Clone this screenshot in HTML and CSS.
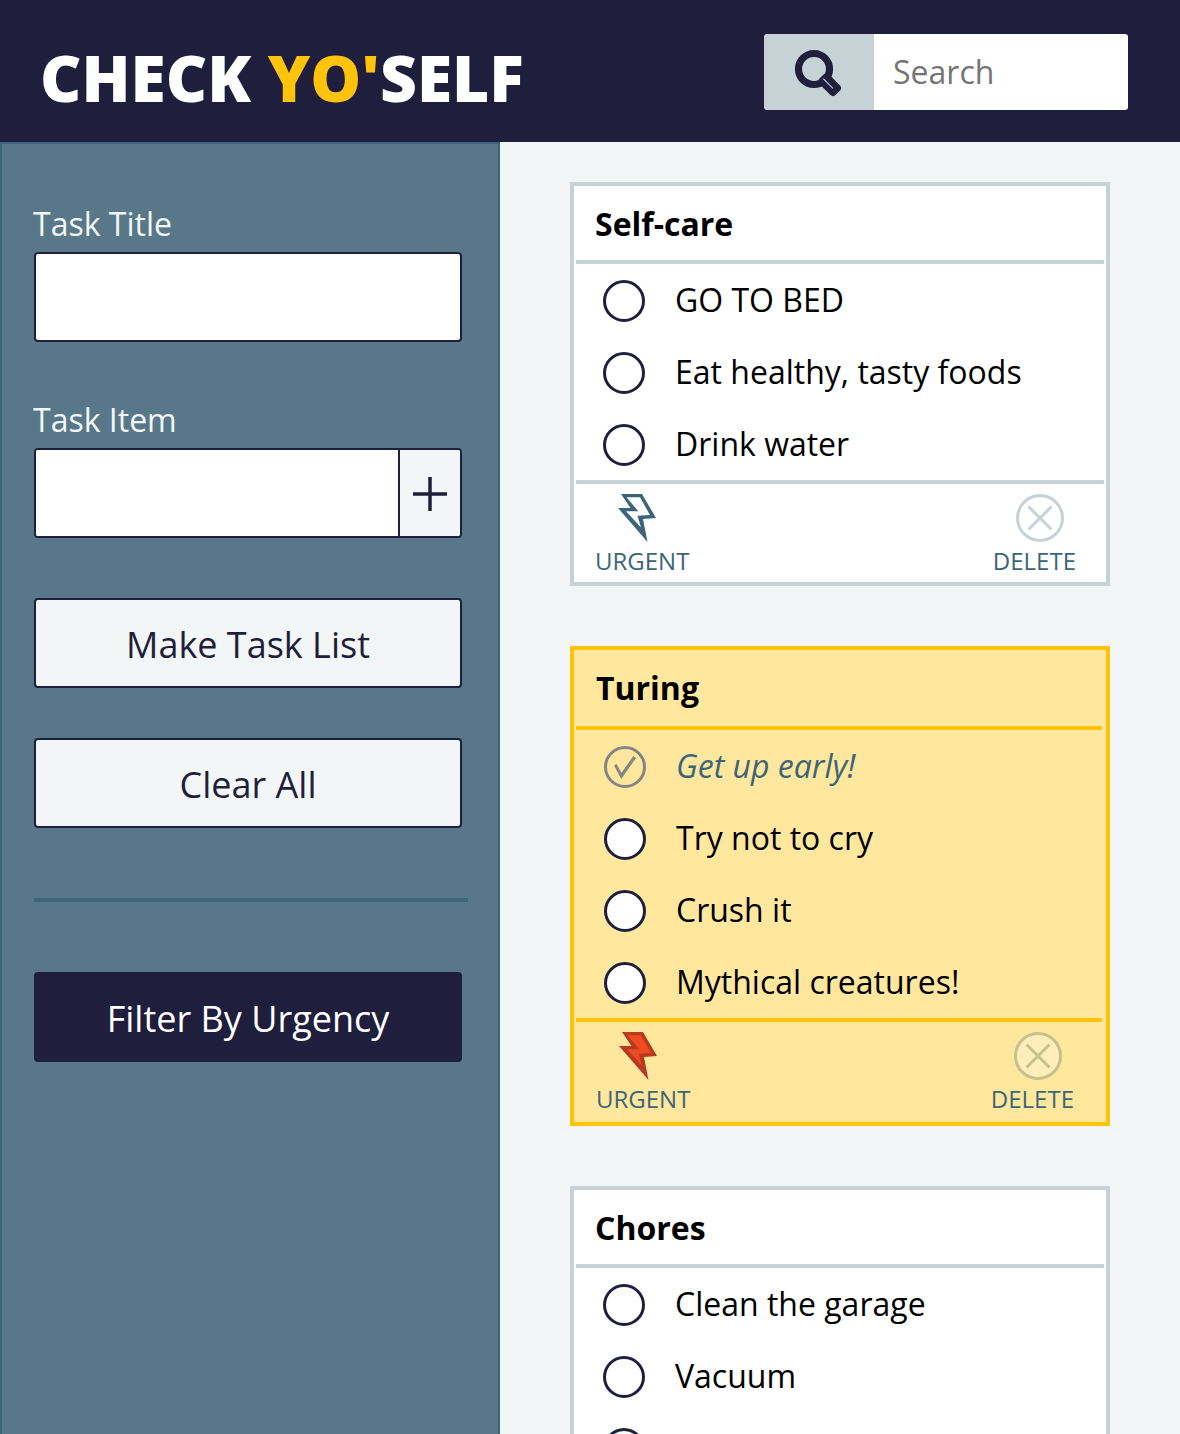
FILE: index.html
```html
<!DOCTYPE html>
<html lang="en">
<head>
  <meta charset="utf-8">
  <meta name="viewport" content="width=device-width, initial-scale=1">
  <title>Check Yo'Self</title>
  <link rel="stylesheet" href="styles.css">
</head>
<body>
  <svg class="sprite" aria-hidden="true">
    <symbol id="bolt" viewBox="0 0 48 48">
      <path class="bolt-edge" d="M3 0H24L38 24L25 25L29.500 48L0 14H12.500Z"/>
      <path class="bolt-fill" d="M8.500 3.200H22L32 21L19.500 21.700L23 33.500L8 17.300H20.300Z"/>
    </symbol>
    <symbol id="cross" viewBox="0 0 48 48">
      <circle class="cross-ring" cx="24" cy="24" r="22.500"/>
      <path class="cross-mark" d="M12.500 12.500L35.500 35.500M35.500 12.500L12.500 35.500"/>
    </symbol>
  </svg>

  <header class="header">
    <h1 class="brand">CHECK <span class="brand-accent">YO'</span>SELF</h1>
    <form class="search" role="search">
      <button class="search-button" type="button" aria-label="Search tasks">
        <svg class="search-icon" viewBox="0 0 48 48" aria-hidden="true">
          <circle cx="19" cy="21" r="15.500" fill="none" stroke="currentColor" stroke-width="7.200"/>
          <rect x="26" y="23.200" width="23" height="13.600" rx="4" fill="currentColor" transform="rotate(45 28 30)"/>
          <path d="M28.300 30.700L38 40.300" fill="none" stroke="#c7d2d7" stroke-width="1.100"/>
        </svg>
      </button>
      <input class="search-input" type="text" placeholder="Search" aria-label="Search">
    </form>
  </header>

  <div class="layout">
    <aside class="sidebar">
      <form class="task-form">
        <label class="field-label" for="task-title">Task Title</label>
        <input class="field" id="task-title" type="text">
        <label class="field-label" for="task-item">Task Item</label>
        <div class="field field-group">
          <input class="field-input" id="task-item" type="text">
          <button class="add-button" type="button" aria-label="Add item">
            <svg class="plus-icon" viewBox="0 0 34 34" aria-hidden="true"><path d="M17 0V34M0 17H34" fill="none" stroke="currentColor" stroke-width="3.500"/></svg>
          </button>
        </div>
        <button class="button" type="button">Make Task List</button>
        <button class="button" type="button">Clear All</button>
      </form>
      <hr class="divider">
      <button class="button button-dark" type="button">Filter By Urgency</button>
    </aside>

    <main class="board">
      <article class="card">
        <h2 class="card-title">Self-care</h2>
        <ul class="items">
          <li><label class="item"><input class="check" type="checkbox"><span>GO TO BED</span></label></li>
          <li><label class="item"><input class="check" type="checkbox"><span>Eat healthy, tasty foods</span></label></li>
          <li><label class="item"><input class="check" type="checkbox"><span>Drink water</span></label></li>
        </ul>
        <footer class="card-footer">
          <button class="action" type="button"><svg class="action-icon"><use href="#bolt"/></svg>URGENT</button>
          <button class="action" type="button"><svg class="action-icon"><use href="#cross"/></svg>DELETE</button>
        </footer>
      </article>

      <article class="card card-urgent">
        <h2 class="card-title">Turing</h2>
        <ul class="items">
          <li><label class="item"><input class="check" type="checkbox" checked><span>Get up early!</span></label></li>
          <li><label class="item"><input class="check" type="checkbox"><span>Try not to cry</span></label></li>
          <li><label class="item"><input class="check" type="checkbox"><span>Crush it</span></label></li>
          <li><label class="item"><input class="check" type="checkbox"><span>Mythical creatures!</span></label></li>
        </ul>
        <footer class="card-footer">
          <button class="action" type="button"><svg class="action-icon"><use href="#bolt"/></svg>URGENT</button>
          <button class="action" type="button"><svg class="action-icon"><use href="#cross"/></svg>DELETE</button>
        </footer>
      </article>

      <article class="card">
        <h2 class="card-title">Chores</h2>
        <ul class="items">
          <li><label class="item"><input class="check" type="checkbox"><span>Clean the garage</span></label></li>
          <li><label class="item"><input class="check" type="checkbox"><span>Vacuum</span></label></li>
          <li><label class="item"><input class="check" type="checkbox" aria-label="New item"></label></li>
        </ul>
      </article>
    </main>
  </div>
</body>
</html>
```
FILE: styles.css
```css
:root {
  --navy: #1f1e3c;
  --teal: #3c6579;
  --slate: #587889;
  --mist: #c7d2d7;
  --pale: #f3f6f7;
  --yellow: #ffc30b;
}

* {
  box-sizing: border-box;
}

body {
  margin: 0;
  height: 100vh;
  display: flex;
  flex-direction: column;
  font: 32px/44px "Open Sans", sans-serif;
  color: #000;
  background: var(--pale);
}

button,
input {
  font: inherit;
  margin: 0;
}

button {
  cursor: pointer;
}

.sprite {
  display: none;
}

/* Header */
.header {
  display: flex;
  justify-content: space-between;
  align-items: flex-start;
  gap: 40px;
  padding: 34px 52px 20px 40px;
  background: var(--navy);
}

.brand {
  margin: 0;
  font-size: 64px;
  line-height: 88px;
  font-weight: 800;
  color: #fff;
  white-space: nowrap;
}

.brand-accent {
  color: var(--yellow);
}

.search {
  display: flex;
  flex: 0 1 364px;
  height: 76px;
  border-radius: 3px;
  overflow: hidden;
}

.search-button {
  flex: 0 0 110px;
  display: flex;
  align-items: center;
  justify-content: center;
  padding: 0;
  border: 0;
  color: var(--navy);
  background: var(--mist);
}

.search-icon {
  width: 48px;
  height: 48px;
  overflow: visible;
}

.search-input {
  flex: 1;
  min-width: 0;
  padding: 0 19px;
  border: 0;
  background: #fff;
}

.search-input::placeholder {
  color: #757575;
}

/* Layout */
.layout {
  flex: 1;
  min-height: 0;
  display: grid;
  grid-template-columns: 500px 1fr;
}

.board {
  display: flex;
  flex-direction: column;
  gap: 60px;
  padding: 40px 70px;
  overflow-y: auto;
  scrollbar-width: none;
}

/* Sidebar */
.sidebar {
  padding: 58px 30px 58px 31px;
  border: 2px solid var(--teal);
  border-bottom: 0;
  background: var(--slate);
}

.task-form,
.sidebar {
  display: flex;
  flex-direction: column;
}

.field-label {
  margin-bottom: 6px;
  color: var(--pale);
}

.field,
.button {
  height: 90px;
  margin: 0 6px 0 1px;
  border: 2px solid var(--navy);
  border-radius: 4px;
}

.field {
  margin-bottom: 56px;
  padding: 0 16px;
  background: #fff;
}

.field-group {
  display: flex;
  margin-bottom: 60px;
  padding: 0;
  overflow: hidden;
}

.field-input {
  flex: 1;
  min-width: 0;
  padding: 0 16px;
  border: 0;
}

.add-button {
  flex: 0 0 62px;
  display: flex;
  align-items: center;
  justify-content: center;
  padding: 2px 0 0;
  border: 0;
  border-left: 2px solid var(--navy);
  color: var(--navy);
  background: var(--pale);
}

.plus-icon {
  width: 34px;
  height: 34px;
}

.button {
  padding: 4px 0 0;
  font-size: 36px;
  color: var(--navy);
  background: var(--pale);
}

.button + .button {
  margin-top: 50px;
}

.button-dark {
  color: #fff;
  background: var(--navy);
}

.divider {
  width: auto;
  margin: 70px 0 70px 1px;
  border: 0;
  border-top: 4px solid var(--teal);
}

/* Cards */
.card {
  --line: var(--mist);
  --fill: #fff;
  --inset: 19px;
  --bolt-edge: var(--teal);
  --bolt-fill: #fff;
  --cross: var(--mist);
  --cross-fill: #fff;
  flex: none;
  padding: 2px;
  border: 4px solid var(--line);
  background: var(--fill);
}

.card-urgent {
  --line: var(--yellow);
  --fill: #ffe79d;
  --inset: 20px;
  --bolt-edge: #b63a20;
  --bolt-fill: #f04a23;
  --cross: #c5c28e;
  --cross-fill: #ffeebb;
  padding-right: 4px;
}

.card-title {
  margin: 0;
  padding: 14px var(--inset);
  border-bottom: 4px solid var(--line);
  font-size: 32px;
  line-height: 44px;
  font-weight: 700;
}

.card-urgent .card-title {
  padding-bottom: 16px;
}

.items {
  margin: 0;
  padding: 0;
  list-style: none;
  border-bottom: 4px solid var(--line);
}

.item {
  display: flex;
  align-items: center;
  gap: 30px;
  height: 72px;
  margin-left: 8px;
  padding-left: var(--inset);
}

.check {
  appearance: none;
  flex: none;
  width: 42px;
  height: 42px;
  margin-top: 2px;
  border: 3px solid var(--navy);
  border-radius: 50%;
  background: #fff;
}

.check:checked {
  border-color: #858585;
  background: none;
  display: grid;
  place-content: center;
}

.check:checked::before {
  content: "";
  width: 22px;
  height: 24px;
  background: #858585;
  clip-path: polygon(0 44%, 11% 38%, 34% 74%, 88% 4%, 100% 12%, 33% 100%);
}

.check:checked + span {
  font-style: italic;
  color: var(--teal);
}

.card-footer {
  display: flex;
  justify-content: space-between;
  padding: 10px 28px 0 var(--inset);
}

.card-urgent .card-footer {
  padding-bottom: 2px;
}

.action {
  display: flex;
  flex-direction: column;
  align-items: flex-start;
  padding: 0;
  border: 0;
  font-size: 24px;
  line-height: 38px;
  color: var(--teal);
  background: none;
}

.action-icon {
  width: 48px;
  height: 48px;
  margin-left: 23px;
}

.bolt-edge {
  fill: var(--bolt-edge);
}

.bolt-fill {
  fill: var(--bolt-fill);
}

.cross-ring {
  fill: var(--cross-fill);
  stroke: var(--cross);
  stroke-width: 3;
}

.cross-mark {
  fill: none;
  stroke: var(--cross);
  stroke-width: 3;
}
```
